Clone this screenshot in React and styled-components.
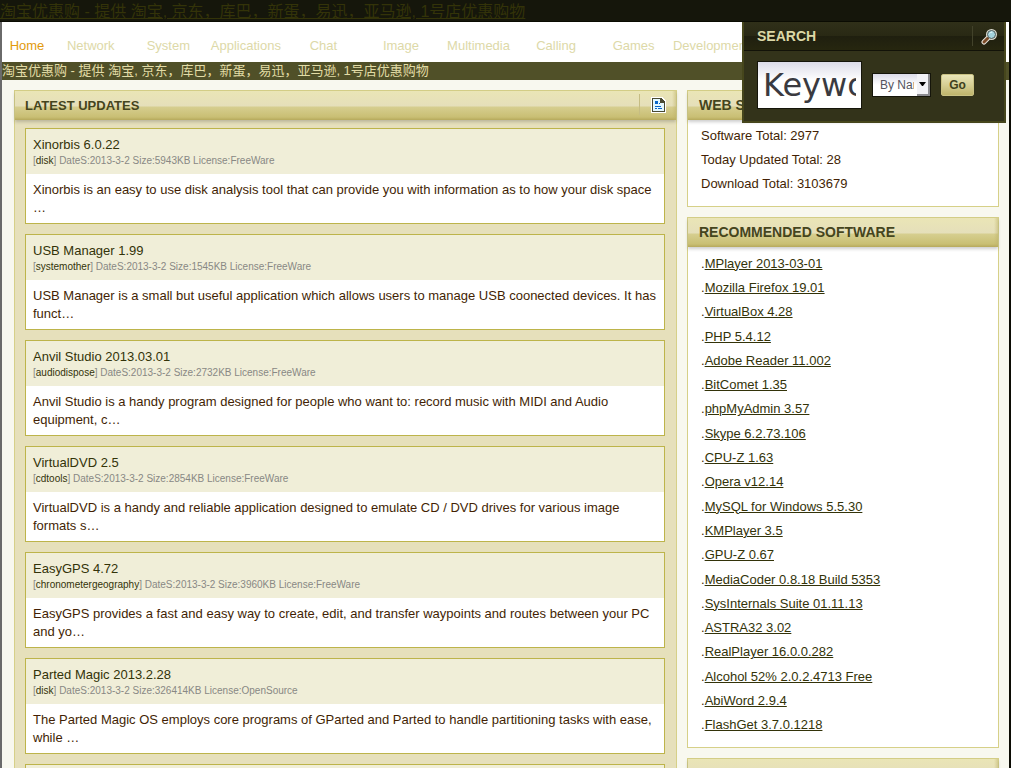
import React from "react";
import styled, { createGlobalStyle } from "styled-components";

const navItems = [
  "Home",
  "Network",
  "System",
  "Applications",
  "Chat",
  "Image",
  "Multimedia",
  "Calling",
  "Games",
  "Development",
];

const updates = [
  {
    name: "Xinorbis 6.0.22",
    category: "disk",
    size: "5943KB",
    license: "FreeWare",
    text: "Xinorbis is an easy to use disk analysis tool that can provide you with information as to how your disk space …",
  },
  {
    name: "USB Manager 1.99",
    category: "systemother",
    size: "1545KB",
    license: "FreeWare",
    text: "USB Manager is a small but useful application which allows users to manage USB coonected devices. It has funct…",
  },
  {
    name: "Anvil Studio 2013.03.01",
    category: "audiodispose",
    size: "2732KB",
    license: "FreeWare",
    text: "Anvil Studio is a handy program designed for people who want to: record music with MIDI and Audio equipment, c…",
  },
  {
    name: "VirtualDVD 2.5",
    category: "cdtools",
    size: "2854KB",
    license: "FreeWare",
    text: "VirtualDVD is a handy and reliable application designed to emulate CD / DVD drives for various image formats s…",
  },
  {
    name: "EasyGPS 4.72",
    category: "chronometergeography",
    size: "3960KB",
    license: "FreeWare",
    text: "EasyGPS provides a fast and easy way to create, edit, and transfer waypoints and routes between your PC and yo…",
  },
  {
    name: "Parted Magic 2013.2.28",
    category: "disk",
    size: "326414KB",
    license: "OpenSource",
    text: "The Parted Magic OS employs core programs of GParted and Parted to handle partitioning tasks with ease, while …",
  },
];

const stats = [
  "Software Total: 2977",
  "Today Updated Total: 28",
  "Download Total: 3103679",
];

const recommended = [
  "MPlayer 2013-03-01",
  "Mozilla Firefox 19.01",
  "VirtualBox 4.28",
  "PHP 5.4.12",
  "Adobe Reader 11.002",
  "BitComet 1.35",
  "phpMyAdmin 3.57",
  "Skype 6.2.73.106",
  "CPU-Z 1.63",
  "Opera v12.14",
  "MySQL for Windows 5.5.30",
  "KMPlayer 3.5",
  "GPU-Z 0.67",
  "MediaCoder 0.8.18 Build 5353",
  "SysInternals Suite 01.11.13",
  "ASTRA32 3.02",
  "RealPlayer 16.0.0.282",
  "Alcohol 52% 2.0.2.4713 Free",
  "AbiWord 2.9.4",
  "FlashGet 3.7.0.1218",
];

const slogan = "淘宝优惠购 - 提供 淘宝, 京东，库巴，新蛋，易迅，亚马逊, 1号店优惠购物";

const SearchIcon = () => (
  <svg width="17" height="17" viewBox="0 0 17 17" aria-hidden="true">
    <path d="M3 14 L7 10" stroke="#e8e4dc" strokeWidth="5" strokeLinecap="round" />
    <circle cx="10.5" cy="6.5" r="5.5" fill="#dcdcd0" />
    <path d="M3 14 L6.5 10.5" stroke="#7a4a26" strokeWidth="3" strokeLinecap="round" />
    <circle cx="10.5" cy="6.5" r="4" fill="#a3d3dd" stroke="#4d5a5a" strokeWidth="1" />
    <path d="M8.5 5.5 Q9.5 4 11.5 4" stroke="#e9fbff" strokeWidth="1" fill="none" />
  </svg>
);

const PageIcon = () => (
  <svg width="15" height="16" viewBox="0 0 15 16" shapeRendering="crispEdges" aria-hidden="true">
    <path d="M0 0H11L15 4V16H0Z" fill="#fff" />
    <path d="M1 1H10L14 5V15H1Z" fill="#4a4a33" />
    <path d="M2 2H9V6H13V14H2Z" fill="#e4f8ff" />
    <path d="M4 4H7V7H4ZM4 9H10V10H4ZM4 11H6V12H4ZM7 11H11V12H7ZM8 6H9V7H8Z" fill="#0a66c8" />
  </svg>
);

function App() {
  return (
    <Layout>
      <GlobalStyle />
      <TopBar>
        <TopLink href="#">{slogan}</TopLink>
      </TopBar>
      <Page>
        <Nav>
          {navItems.map((item, i) => (
            <NavLink key={item} href="#" $active={i === 0}>
              {item}
            </NavLink>
          ))}
        </Nav>
        <Slogan>{slogan}</Slogan>
        <SearchBox>
          <SearchHead>
            <SearchTitle>SEARCH</SearchTitle>
            <SearchIconCell>
              <SearchIcon />
            </SearchIconCell>
          </SearchHead>
          <SearchForm onSubmit={(e) => e.preventDefault()}>
            <Keyword aria-label="Keywords" defaultValue="Keywords" />
            <SelectWrap>
              <Select aria-label="Search by">
                <option>By Name</option>
              </Select>
              <SelectArrow>
                <svg width="7" height="4" viewBox="0 0 7 4" aria-hidden="true">
                  <path d="M0 0H7L4 4H3Z" fill="#000" />
                </svg>
              </SelectArrow>
            </SelectWrap>
            <GoButton type="submit">Go</GoButton>
          </SearchForm>
        </SearchBox>
        <Columns>
          <Updates>
            <PanelHead>
              <UpdatesTitle>LATEST UPDATES</UpdatesTitle>
              <PageIconCell>
                <PageIcon />
              </PageIconCell>
            </PanelHead>
            <UpdateList>
              {updates.map((item) => (
                <Card key={item.name}>
                  <CardHead>
                    <CardTitle href="#">{item.name}</CardTitle>
                    <CardMeta>
                      [<CategoryLink href="#">{item.category}</CategoryLink>] DateS:2013-3-2 Size:
                      {item.size} License:{item.license}
                    </CardMeta>
                  </CardHead>
                  <CardText>{item.text}</CardText>
                </Card>
              ))}
              <Card>
                <CardHead />
              </Card>
            </UpdateList>
          </Updates>
          <Sidebar>
            <SidePanel>
              <PanelHead>
                <PanelTitle>WEB STATISTICS</PanelTitle>
              </PanelHead>
              <StatList>
                {stats.map((stat) => (
                  <li key={stat}>{stat}</li>
                ))}
              </StatList>
            </SidePanel>
            <SidePanel>
              <PanelHead>
                <PanelTitle>RECOMMENDED SOFTWARE</PanelTitle>
              </PanelHead>
              <SoftwareList>
                {recommended.map((name) => (
                  <li key={name}>
                    .<SoftwareLink href="#">{name}</SoftwareLink>
                  </li>
                ))}
              </SoftwareList>
            </SidePanel>
            <SidePanel>
              <PanelHead />
            </SidePanel>
          </Sidebar>
        </Columns>
      </Page>
    </Layout>
  );
}

export default App;

const GlobalStyle = createGlobalStyle`
  * {
    box-sizing: border-box;
  }
  body {
    margin: 0;
    background: #fff;
    color: #431f04;
    font-family: "Liberation Sans", Arial, "Noto Sans CJK SC", sans-serif;
    font-size: 13px;
  }
  ul, h2, p {
    margin: 0;
    padding: 0;
    list-style: none;
  }
`;

const Layout = styled.div`
  height: 100vh;
  margin-right: 13px;
  display: flex;
  flex-direction: column;
  overflow: hidden;
`;

const TopBar = styled.div`
  flex: none;
  height: 22px;
  background-color: #15160b;
  border-bottom: 1px solid #0a0b02;
`;

const TopLink = styled.a`
  display: block;
  color: #333309;
  font-size: 16px;
  line-height: 24px;
  white-space: nowrap;
`;

const Page = styled.div`
  position: relative;
  flex: 1;
  min-height: 0;
  background-color: #f8f8ef;
  border-left: 2px solid #6a6a6a;
  border-right: 2px solid #0c0c04;
`;

const Nav = styled.nav`
  height: 40px;
  padding: 6px 259px 0 0;
  background-color: #fff;
  display: grid;
  grid-template-columns: 50px repeat(9, 1fr);
  align-items: center;
`;

const NavLink = styled.a`
  color: ${(props) => (props.$active ? "#e29a0c" : "#ddd9a8")};
  text-align: center;
  text-decoration: none;
`;

const Slogan = styled.div`
  height: 18px;
  background-color: #505028;
  color: #e2dca6;
  line-height: 18px;
  white-space: nowrap;
`;

const SearchBox = styled.div`
  position: absolute;
  top: 0;
  right: 3px;
  width: 264px;
  background-color: #33331a;
  border: 2px solid #46461c;
  border-top: 0;
`;

const SearchHead = styled.div`
  height: 29px;
  display: flex;
  justify-content: space-between;
  background: linear-gradient(#303019, #292914 50%, #1f1f0f 51%, #26260f);
  border-bottom: 1px solid #121208;
`;

const SearchTitle = styled.h2`
  padding-left: 13px;
  color: #dcd8a6;
  font-size: 14px;
  line-height: 28px;
`;

const SearchIconCell = styled.div`
  width: 32px;
  margin: 4px 0;
  padding-left: 8px;
  border-left: 1px solid #42422a;
  display: flex;
  align-items: center;
`;

const SearchForm = styled.form`
  display: flex;
  align-items: center;
  gap: 10px;
  padding: 10px 13px 12px;
`;

const Keyword = styled.input`
  width: 105px;
  height: 48px;
  padding: 0 5px;
  border: 1px solid #15150a;
  background: linear-gradient(#dcdce8, #fff 40%);
  color: #3a3a40;
  font-family: "DejaVu Sans", sans-serif;
  font-size: 32px;
`;

const SelectWrap = styled.div`
  position: relative;
  width: 59px;
  height: 24px;
`;

const Select = styled.select`
  appearance: none;
  width: 100%;
  height: 100%;
  padding: 0 16px 0 7px;
  border: 1px solid #15150a;
  border-radius: 0;
  background: linear-gradient(#dcdce8, #fff 50%);
  color: #55555e;
  font-family: "Liberation Sans", Arial, sans-serif;
  font-size: 12px;
`;

const SelectArrow = styled.span`
  position: absolute;
  top: 1px;
  right: 1px;
  width: 13px;
  height: 22px;
  background-color: #f2f2f6;
  border-right: 2px solid #8c8c90;
  border-bottom: 2px solid #8c8c90;
  display: flex;
  align-items: center;
  justify-content: center;
  pointer-events: none;
`;

const GoButton = styled.button`
  width: 33px;
  height: 22px;
  padding: 0;
  border: 1px solid #c9c283;
  border-radius: 2px;
  background: linear-gradient(#e9e5b8, #d6cf94 50%, #bfb56c);
  color: #40401c;
  font-family: "Liberation Sans", Arial, sans-serif;
  font-size: 12px;
  font-weight: bold;
`;

const Columns = styled.div`
  display: flex;
  gap: 10px;
  padding: 10px 10px 0 12px;
`;

const Updates = styled.section`
  flex: 1;
  border: 1px solid #d6d088;
  background-color: #e6e0bb;
`;

const Sidebar = styled.aside`
  width: 312px;
  display: flex;
  flex-direction: column;
  gap: 10px;
`;

const SidePanel = styled.section`
  border: 1px solid #d6d088;
  background-color: #fff;
`;

const PanelHead = styled.div`
  height: 29px;
  display: flex;
  justify-content: space-between;
  background:
    linear-gradient(to left, rgba(190, 178, 105, 0.5), transparent 4px),
    linear-gradient(#eae5b6, #e5dfba 15px, #d6ce8f 16px, #c9bf74 26px, #b6a95c);
  box-shadow: 0 2px 3px rgba(60, 60, 60, 0.25);
`;

const PanelTitle = styled.h2`
  padding-left: 11px;
  color: #45451d;
  font-size: 14px;
  line-height: 29px;
`;

const UpdatesTitle = styled(PanelTitle)`
  padding-left: 10px;
  font-size: 13px;
`;

const PageIconCell = styled.div`
  width: 37px;
  margin: 3px 0 5px;
  padding-left: 11px;
  border-left: 1px solid #c6bd83;
  display: flex;
  align-items: center;
`;

const UpdateList = styled.div`
  display: flex;
  flex-direction: column;
  gap: 10px;
  padding: 8px 11px 10px 10px;
`;

const Card = styled.article`
  min-height: 96px;
  border: 1px solid #bdb44a;
  background-color: #fff;
`;

const CardHead = styled.div`
  min-height: 45px;
  padding: 7px 7px 5px;
  background-color: #f0eed8;
`;

const CardTitle = styled.a`
  display: block;
  color: #333309;
  line-height: 17px;
  text-decoration: none;
`;

const CardMeta = styled.p`
  color: #888884;
  font-size: 10px;
  line-height: 16px;
`;

const CategoryLink = styled.a`
  color: #333309;
  text-decoration: none;
`;

const CardText = styled.p`
  padding: 7px 7px 5px;
  line-height: 18px;
`;

const StatList = styled.ul`
  padding: 4px 13px 10px;
  line-height: 24px;
`;

const SoftwareList = styled.ul`
  min-height: 500px;
  padding: 4px 13px 10px;
  display: grid;
  grid-auto-rows: 1fr;
  align-items: center;
`;

const SoftwareLink = styled.a`
  color: #333309;
`;
